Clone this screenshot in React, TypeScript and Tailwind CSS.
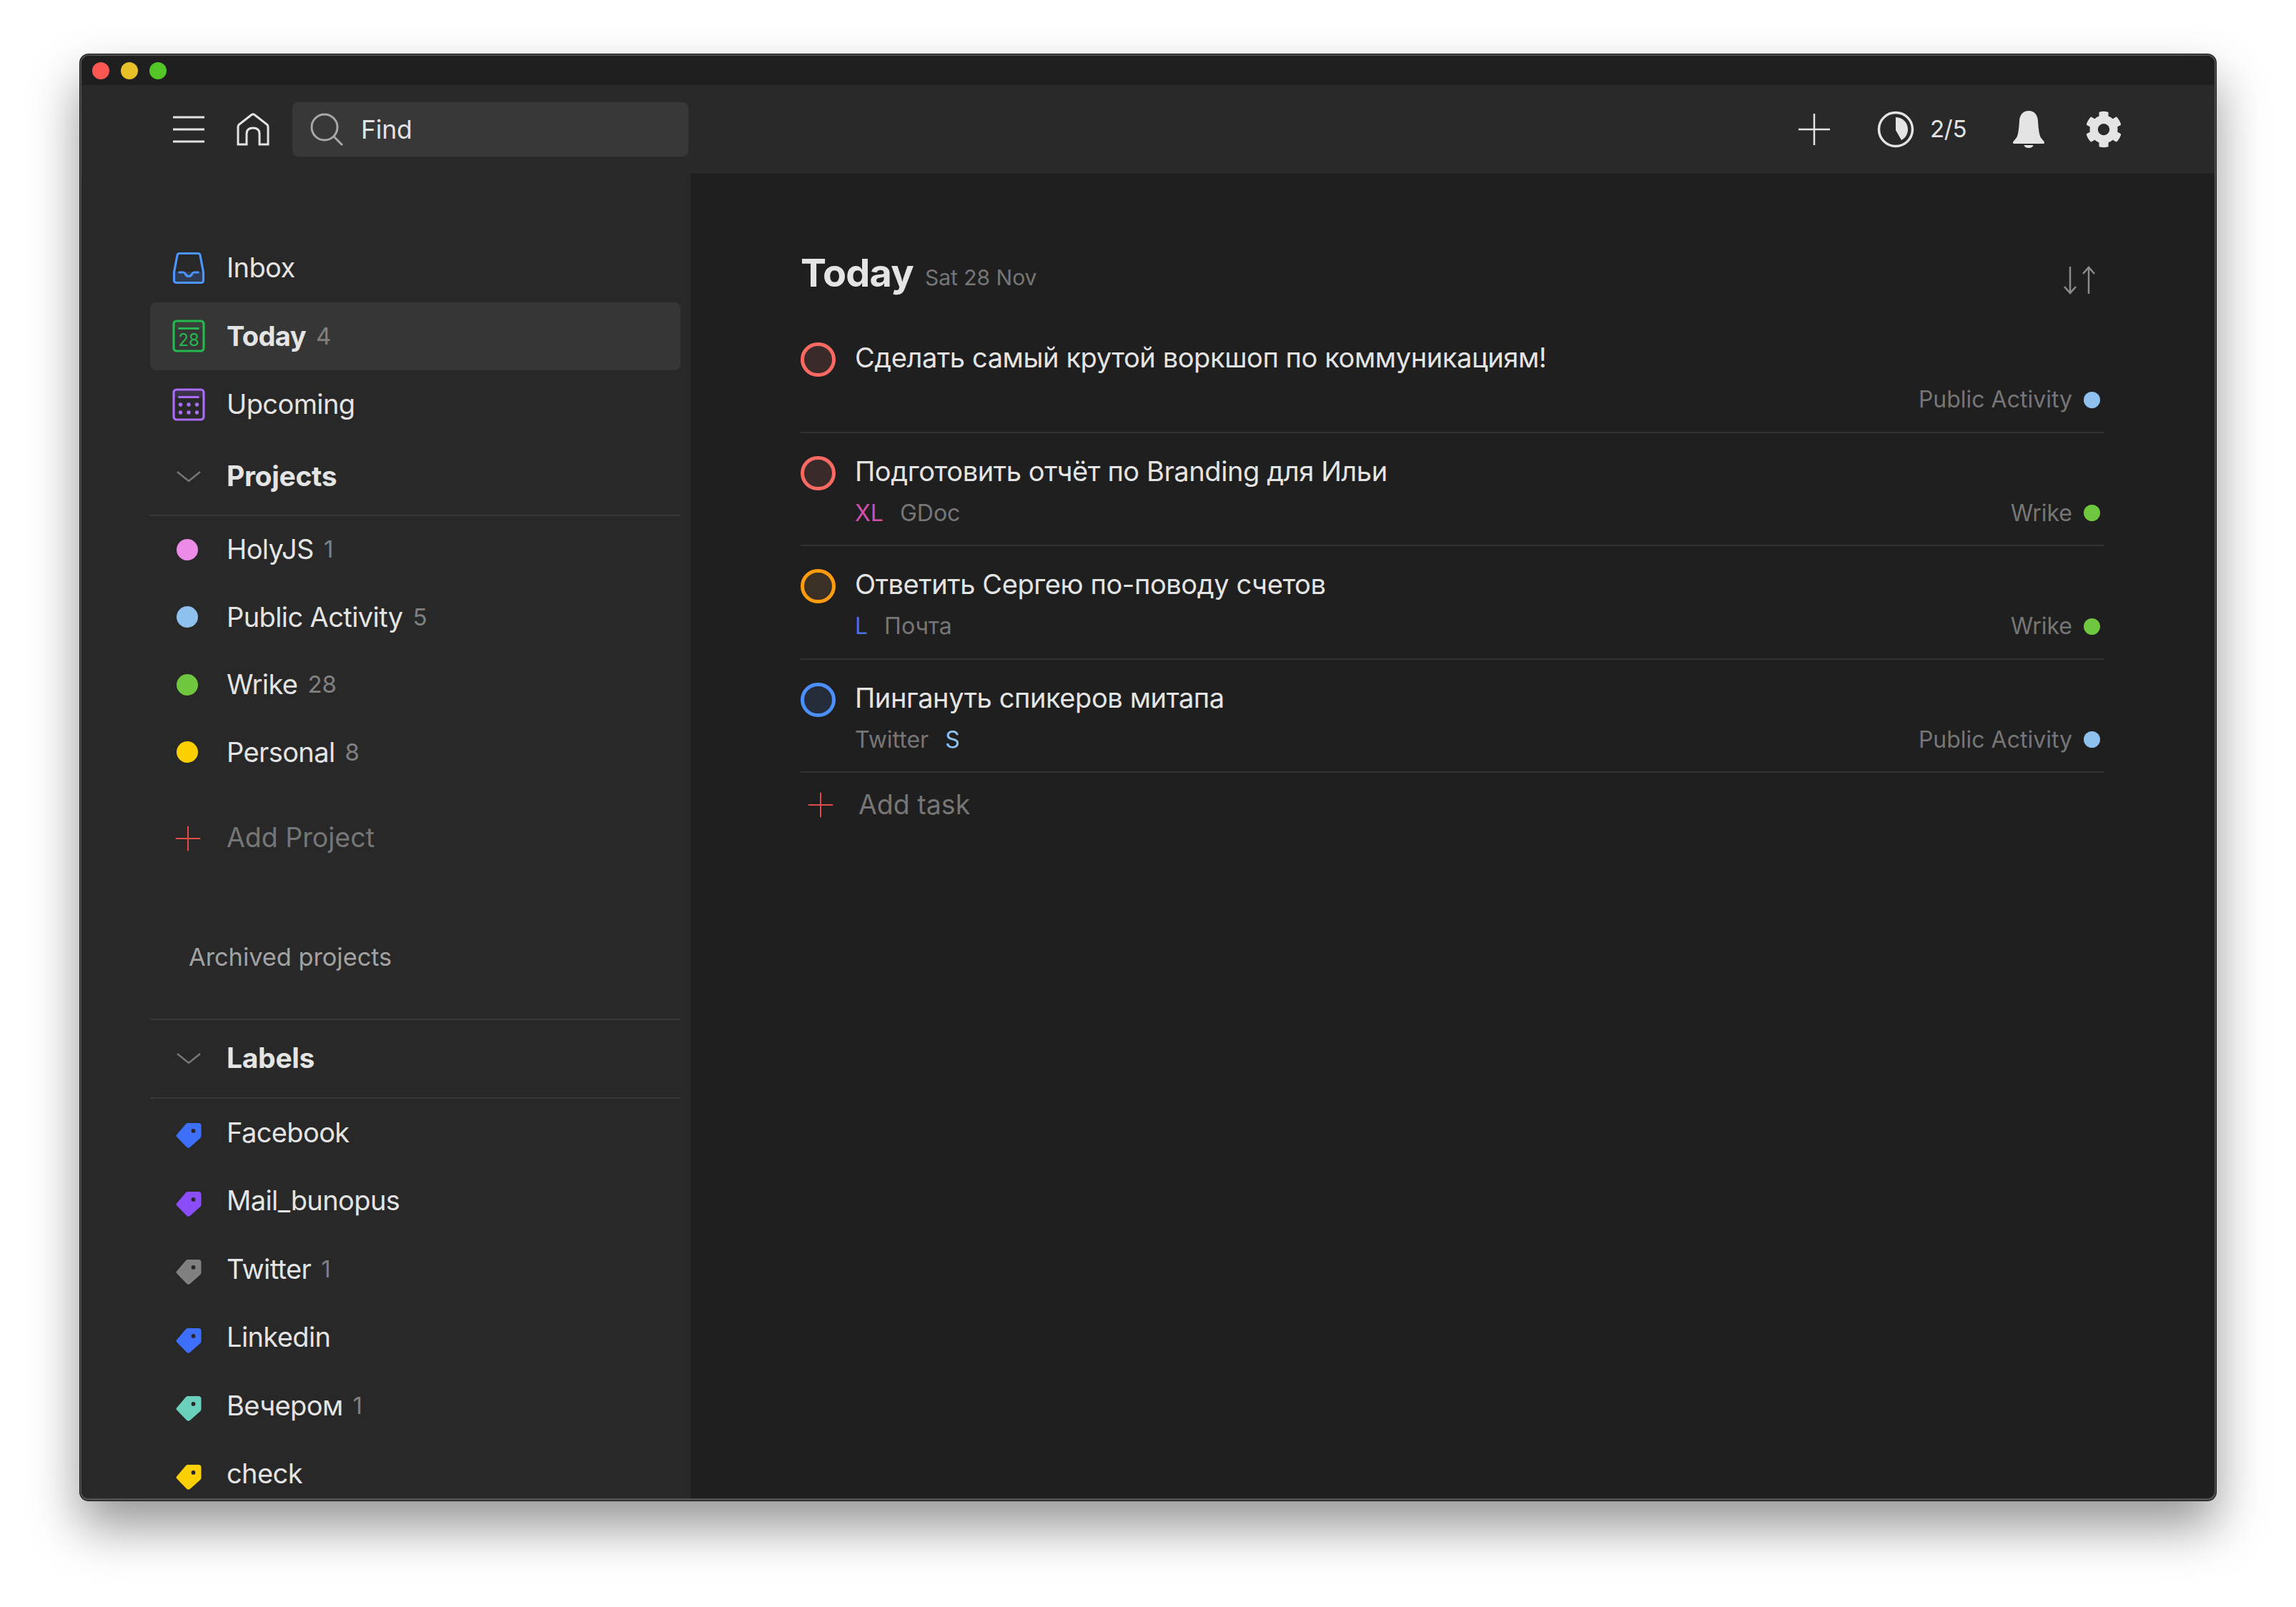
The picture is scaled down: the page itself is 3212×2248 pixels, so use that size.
import { FaCog } from "react-icons/fa";

const font = "font-['Inter','Noto_Sans',sans-serif]";

function Plus({ className }: { className: string }) {
  return (
    <svg viewBox="0 0 46 46" className={className} fill="none" stroke="currentColor" strokeWidth="2.5">
      <path d="M23 1v44M1 23h44" />
    </svg>
  );
}

function Chevron() {
  return (
    <svg viewBox="0 0 34 18" className="w-[34px] h-[18px] text-[#777]" fill="none" stroke="currentColor" strokeWidth="2.5">
      <path d="M1 2l16 13L33 2" />
    </svg>
  );
}

function Tag({ color }: { color: string }) {
  return (
    <span className="block pl-[5px] mt-[8px]">
      <svg viewBox="0 0 36 36" className="w-[36px] h-[36px]">
        <path
          fill={color}
          fillRule="evenodd"
          d="M1.2 17.2 14 2.2Q15.2.9 17 .9h14.5Q35.5.9 35.5 5v14q0 1.8-1.2 3L20 34.8q-2.500 2-4.800 0L1.200 20.300q-1.300-1.500 0-3.100ZM24.500 9a2.900 2.900 0 1 0 0 5.800 2.900 2.900 0 0 0 0-5.800Z"
        />
      </svg>
    </span>
  );
}

function Dot({ color }: { color: string }) {
  return (
    <span className="block pl-[6px]">
      <span className={`block w-[30px] h-[30px] rounded-full ${color}`} />
    </span>
  );
}

function NavIcon({ kind }: { kind: "inbox" | "today" | "upcoming" }) {
  if (kind === "inbox") {
    return (
      <svg viewBox="0 0 46 46" className="w-[46px] h-[46px]" fill="none">
        <path d="M2.500 28v12.500a3 3 0 0 0 3 3h35a3 3 0 0 0 3-3V28Z" fill="#2f3b52" />
        <path
          d="M10 2.500h26a3 3 0 0 1 3 2.500l4.500 24v11.500a3 3 0 0 1-3 3h-35a3 3 0 0 1-3-3V29L7 5a3 3 0 0 1 3-2.500Z"
          stroke="#4c94ff"
          strokeWidth="3.200"
        />
        <path d="M8.500 29h7c1.500 0 2 1 3 2.500 1 2 2.500 3 4.500 3s3.500-1 4.500-3c1-1.500 1.500-2.500 3-2.500h7" stroke="#4c94ff" strokeWidth="3.200" />
      </svg>
    );
  }
  const stroke = kind === "today" ? "#25b84f" : "#aa6cfa";
  const fill = kind === "today" ? "#3a403a" : "#3a3248";
  return (
    <svg viewBox="0 0 46 46" className="w-[46px] h-[46px]" fill="none">
      <path d="M2.500 13V5.500a3 3 0 0 1 3-3h35a3 3 0 0 1 3 3V13Z" fill={fill} />
      <rect x="2" y="2" width="42" height="42" rx="4" stroke={stroke} strokeWidth="3.200" />
      <path d="M8.500 12.500h29" stroke={stroke} strokeWidth="3" />
      {kind === "today" ? (
        <text x="23" y="37" textAnchor="middle" fontSize="24" fontFamily="Inter" fill={stroke}>
          28
        </text>
      ) : (
        <g fill={stroke}>
          <circle cx="11.500" cy="23" r="2.700" />
          <circle cx="23" cy="23" r="2.700" />
          <circle cx="34.500" cy="23" r="2.700" />
          <circle cx="11.500" cy="34" r="2.700" />
          <circle cx="23" cy="34" r="2.700" />
          <circle cx="34.500" cy="34" r="2.700" />
        </g>
      )}
    </svg>
  );
}

function SideRow({
  icon,
  label,
  count,
  selected,
  bold,
  compact,
}: {
  icon: React.ReactNode;
  label: string;
  count?: number;
  selected?: boolean;
  bold?: boolean;
  compact?: boolean;
}) {
  return (
    <div className={`flex items-center pl-[31px] rounded-[8px] ${compact ? "h-[94.500px]" : "h-[95.500px]"} ${selected ? "bg-[#363636]" : ""}`}>
      <div className="w-[76px] shrink-0 flex items-center">{icon}</div>
      <span className={`text-[38px] tracking-[-0.6px] text-[#e4e4e4] ${bold ? "font-bold" : ""}`}>{label}</span>
      {count !== undefined && <span className="ml-[14px] text-[33px] text-[#808080]">{count}</span>}
    </div>
  );
}

function Section({ label, height }: { label: string; height: string }) {
  return (
    <div className={`flex items-center pl-[37px] border-b-2 border-[#393939] ${height}`}>
      <div className="w-[70px]">
        <Chevron />
      </div>
      <span className="text-[39px] font-bold tracking-[-0.3px] text-[#e4e4e4]">{label}</span>
    </div>
  );
}

function Task({
  title,
  ring,
  meta,
  project,
  dot,
}: {
  title: string;
  ring: string;
  meta?: React.ReactNode;
  project: string;
  dot: string;
}) {
  return (
    <div className="h-[158.500px] border-b-2 border-[#323232] pt-[32px]">
      <div className="flex items-center h-[48px]">
        <span className={`w-[49px] h-[48px] rounded-full border-[5px] shrink-0 ${ring}`} />
        <span className="ml-[27px] -mt-[5px] text-[38px] tracking-[-0.4px] text-[#e4e4e4]">{title}</span>
      </div>
      <div className="flex items-center justify-between h-[38px] mt-[13px] pl-[76px] pr-[6px] text-[32px] text-[#767676]">
        <div className="flex items-center gap-[23px]">{meta}</div>
        <div className="flex items-center gap-[16px]">
          <span>{project}</span>
          <span className={`block w-[23px] h-[23px] rounded-full ${dot}`} />
        </div>
      </div>
    </div>
  );
}

export default function App() {
  return (
    <div className={`${font} w-[3212px] h-[2248px] bg-white overflow-hidden pt-[76px] pl-[112px]`}>
      <div className="w-[2988px] h-[2023px] rounded-[12px] overflow-hidden flex flex-col bg-[#1f1f1f] border-2 border-[#4f4f4f] border-b-[3px] shadow-[0_0_0_1px_#111,0_36px_70px_rgba(0,0,0,0.42)]">
        {/* title bar */}
        <div className="h-[41px] shrink-0 bg-[#1f1f1f] flex items-center gap-[16px] pl-[15px]">
          <span className="w-[24px] h-[24px] rounded-full bg-[#fc5753]" />
          <span className="w-[24px] h-[24px] rounded-full bg-[#e8c12a]" />
          <span className="w-[24px] h-[24px] rounded-full bg-[#53c527]" />
        </div>

        {/* header */}
        <div className="h-[124px] shrink-0 bg-[#292929] flex items-center pl-[128px] pr-[129px] text-[#e4e4e4]">
          <svg viewBox="0 0 44 38" className="w-[44px] h-[38px]" stroke="currentColor" strokeWidth="3">
            <path d="M0 2h44M0 19h44M0 36h44" />
          </svg>
          <svg viewBox="0 0 46 46" className="w-[46px] h-[46px] ml-[45px]" fill="none" stroke="currentColor" strokeWidth="3">
            <path d="M2 44V20q0-2 1-3.500L21 2.500q2-1.500 4 0l18 14q1 1.500 1 3.500v24H32V29q0-8-9-8t-9 8v15Z" />
          </svg>
          <div className="ml-[32px] w-[554px] h-[76px] rounded-[8px] bg-[#383838] flex items-center pl-[25px]">
            <svg viewBox="0 0 46 46" className="w-[46px] h-[46px] text-[#a8a8a8]" fill="none" stroke="currentColor" strokeWidth="3">
              <circle cx="20" cy="20" r="18" />
              <path d="M33 33l12 12" />
            </svg>
            <span className="ml-[25px] mt-[2px] text-[35.500px] tracking-[-0.2px]">Find</span>
          </div>
          <div className="ml-auto flex items-center">
            <Plus className="w-[46px] h-[46px]" />
            <svg viewBox="0 0 52 52" className="w-[52px] h-[52px] ml-[65px]" fill="none">
              <circle cx="26" cy="26" r="23.500" stroke="currentColor" strokeWidth="3.500" />
              <path d="M26 9a17 17 0 0 1 8 32L26 27Z" fill="currentColor" />
            </svg>
            <span className="ml-[22px] text-[33px] tracking-[-0.3px] w-[50px]">2/5</span>
            <svg viewBox="0 0 46 52" className="w-[46px] h-[52px] ml-[65px]" fill="currentColor">
              <path d="M23 0c8 0 12.500 6 13 14 .5 8 1 14 2.500 20 1 4 4 6 6 9 1.200 2 .5 3-1.500 3H3c-2 0-2.700-1-1.500-3 2-3 5-5 6-9C9 28 9.500 22 10 14 10.500 6 15 0 23 0Z" />
              <path d="M16.500 48h13c-1 3-3.500 4-6.500 4s-5.500-1-6.500-4Z" />
            </svg>
            <FaCog className="w-[52px] h-[52px] ml-[56px]" />
          </div>
        </div>

        <div className="flex flex-1 min-h-0">
          {/* sidebar */}
          <aside className="w-[852px] shrink-0 bg-[#282828] pl-[96px] pr-[14px] pt-[84px] overflow-hidden">
            <SideRow icon={<NavIcon kind="inbox" />} label="Inbox" />
            <SideRow icon={<NavIcon kind="today" />} label="Today" count={4} selected bold />
            <SideRow icon={<NavIcon kind="upcoming" />} label="Upcoming" />
            <Section label="Projects" height="h-[108px]" />
            <SideRow compact icon={<Dot color="bg-[#ec8ce8]" />} label="HolyJS" count={1} />
            <SideRow compact icon={<Dot color="bg-[#8fc1ef]" />} label="Public Activity" count={5} />
            <SideRow compact icon={<Dot color="bg-[#6fc63f]" />} label="Wrike" count={28} />
            <SideRow compact icon={<Dot color="bg-[#fbd000]" />} label="Personal" count={8} />
            <div className="flex items-center h-[96px] mt-[25px] pl-[35px] text-[37.500px] text-[#767676]">
              <div className="w-[72px]">
                <Plus className="w-[36px] h-[36px] text-[#e44c4c]" />
              </div>
              Add Project
            </div>
            <div className="h-[96px] mt-[70px] pl-[54px] flex items-center text-[34.300px] text-[#a2a2a2]">Archived projects</div>
            <div className="border-t-2 border-[#393939] mt-[38px]" />
            <Section label="Labels" height="h-[110px]" />
            <SideRow icon={<Tag color="#3e6ffb" />} label="Facebook" />
            <SideRow icon={<Tag color="#8a4df8" />} label="Mail_bunopus" />
            <SideRow icon={<Tag color="#808080" />} label="Twitter" count={1} />
            <SideRow icon={<Tag color="#3e6ffb" />} label="Linkedin" />
            <SideRow icon={<Tag color="#6bd0bb" />} label="Вечером" count={1} />
            <SideRow icon={<Tag color="#fbd000" />} label="check" />
          </aside>

          {/* main */}
          <main className="flex-1 pl-[154px] pr-[154px]">
            <div className="flex items-center h-[204px] pt-[88px] pb-[16px]">
              <h1 className="text-[54px] font-bold tracking-[-0.8px] text-[#e4e4e4]">Today</h1>
              <span className="ml-[16px] mt-[14px] text-[30px] text-[#767676]">Sat 28 Nov</span>
              <svg viewBox="0 0 46 40" className="ml-auto mr-[12px] mt-[22px] w-[46px] h-[40px] text-[#8c8c8c]" fill="none" stroke="currentColor" strokeWidth="2.500">
                <path d="M10 1v37M2 29l8 9 8-9M36 39V2M28 11l8-9 8 9" />
              </svg>
            </div>
            <Task
              title="Сделать самый крутой воркшоп по коммуникациям!"
              ring="border-[#fb6a62] bg-[#3a2a2a]"
              project="Public Activity"
              dot="bg-[#8fc1ef]"
            />
            <Task
              title="Подготовить отчёт по Branding для Ильи"
              ring="border-[#fb6a62] bg-[#3a2a2a]"
              meta={
                <>
                  <span className="text-[#d14fa8]">XL</span>
                  <span>GDoc</span>
                </>
              }
              project="Wrike"
              dot="bg-[#6fc63f]"
            />
            <Task
              title="Ответить Сергею по-поводу счетов"
              ring="border-[#ff9b0e] bg-[#3a3025]"
              meta={
                <>
                  <span className="text-[#4a6fe0]">L</span>
                  <span>Почта</span>
                </>
              }
              project="Wrike"
              dot="bg-[#6fc63f]"
            />
            <Task
              title="Пингануть спикеров митапа"
              ring="border-[#4c90ff] bg-[#252d3a]"
              meta={
                <>
                  <span>Twitter</span>
                  <span className="text-[#8fc1ef]">S</span>
                </>
              }
              project="Public Activity"
              dot="bg-[#8fc1ef]"
            />
            <div className="flex items-center h-[90px] pl-[10px] text-[37.500px] text-[#767676]">
              <Plus className="w-[36px] h-[36px] text-[#e44c4c]" />
              <span className="ml-[35px]">Add task</span>
            </div>
          </main>
        </div>
      </div>
    </div>
  );
}
